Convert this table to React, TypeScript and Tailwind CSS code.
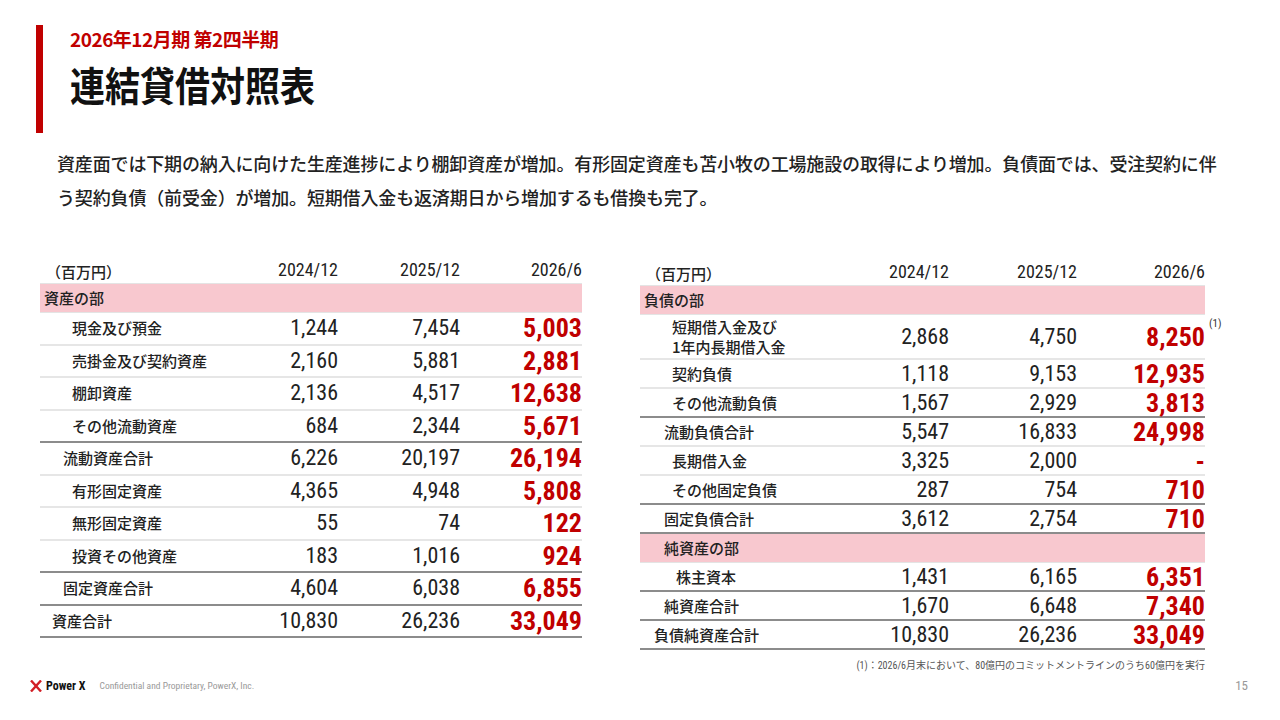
type Row = {
  label: string | string[];
  a?: string;
  b?: string;
  c?: string;
  kind: "section" | "item" | "subtotal" | "total";
  indent: string;
  note?: boolean;
  h?: string;
};

const assets: Row[] = [
  { label: "資産の部", kind: "section", indent: "pl-[4px]" },
  { label: "現金及び預金", a: "1,244", b: "7,454", c: "5,003", kind: "item", indent: "pl-[32px]" },
  { label: "売掛金及び契約資産", a: "2,160", b: "5,881", c: "2,881", kind: "item", indent: "pl-[32px]" },
  { label: "棚卸資産", a: "2,136", b: "4,517", c: "12,638", kind: "item", indent: "pl-[32px]" },
  { label: "その他流動資産", a: "684", b: "2,344", c: "5,671", kind: "item", indent: "pl-[32px]" },
  { label: "流動資産合計", a: "6,226", b: "20,197", c: "26,194", kind: "subtotal", indent: "pl-[23px]" },
  { label: "有形固定資産", a: "4,365", b: "4,948", c: "5,808", kind: "item", indent: "pl-[32px]" },
  { label: "無形固定資産", a: "55", b: "74", c: "122", kind: "item", indent: "pl-[32px]" },
  { label: "投資その他資産", a: "183", b: "1,016", c: "924", kind: "item", indent: "pl-[32px]" },
  { label: "固定資産合計", a: "4,604", b: "6,038", c: "6,855", kind: "subtotal", indent: "pl-[23px]" },
  { label: "資産合計", a: "10,830", b: "26,236", c: "33,049", kind: "total", indent: "pl-[12px]" },
];

const liabilities: Row[] = [
  { label: "負債の部", kind: "section", indent: "pl-[4px]" },
  {
    label: ["短期借入金及び", "1年内長期借入金"],
    a: "2,868",
    b: "4,750",
    c: "8,250",
    kind: "item",
    indent: "pl-[32px]",
    note: true,
    h: "h-[45px]",
  },
  { label: "契約負債", a: "1,118", b: "9,153", c: "12,935", kind: "item", indent: "pl-[32px]" },
  { label: "その他流動負債", a: "1,567", b: "2,929", c: "3,813", kind: "item", indent: "pl-[32px]" },
  { label: "流動負債合計", a: "5,547", b: "16,833", c: "24,998", kind: "subtotal", indent: "pl-[24px]" },
  { label: "長期借入金", a: "3,325", b: "2,000", c: "-", kind: "item", indent: "pl-[32px]" },
  { label: "その他固定負債", a: "287", b: "754", c: "710", kind: "item", indent: "pl-[32px]" },
  { label: "固定負債合計", a: "3,612", b: "2,754", c: "710", kind: "subtotal", indent: "pl-[24px]" },
  { label: "純資産の部", kind: "section", indent: "pl-[24px]" },
  { label: "株主資本", a: "1,431", b: "6,165", c: "6,351", kind: "item", indent: "pl-[36px]" },
  { label: "純資産合計", a: "1,670", b: "6,648", c: "7,340", kind: "subtotal", indent: "pl-[24px]" },
  { label: "負債純資産合計", a: "10,830", b: "26,236", c: "33,049", kind: "total", indent: "pl-[14px]" },
];

function Table({
  rows,
  cols,
  rowH,
}: {
  rows: Row[];
  cols: string;
  rowH: string;
}) {
  return (
    <div className="flex flex-col">
      <div className={`grid ${cols} items-end h-[26px] text-[#222] border-b border-[#e4e4e4] font-['Roboto_Condensed','Liberation_Sans_Narrow','Noto_Sans_CJK_JP',sans-serif]`}>
        <div className="pl-[6px] text-[15px] leading-none pb-[4px] font-medium font-['Noto_Sans_CJK_JP',sans-serif]">
          （百万円）
        </div>
        <div className="text-right text-[18px] leading-none pb-[4px]">2024/12</div>
        <div className="text-right text-[18px] leading-none pb-[4px]">2025/12</div>
        <div className="text-right text-[18px] leading-none pb-[4px]">2026/6</div>
      </div>
      {rows.map((r, i) => {
        const next = rows[i + 1];
        const darkBelow =
          !next ||
          next.kind === "subtotal" ||
          next.kind === "total" ||
          (r.kind === "subtotal" && next.kind === "section");
        if (r.kind === "section") {
          return (
            <div
              key={i}
              className={`h-[29px] bg-[#f8c8cf] flex items-center ${r.indent} text-[15px] font-medium text-[#222] border-b border-[#e4e4e4] font-['Noto_Sans_CJK_JP',sans-serif]`}
            >
              {r.label}
            </div>
          );
        }
        const border = darkBelow
          ? "border-b-2 border-[#8c8c8c]"
          : "border-b-2 border-[#e6e6e6]";
        return (
          <div
            key={i}
            className={`grid ${cols} items-center ${r.h ?? rowH} ${border} font-['Roboto_Condensed','Liberation_Sans_Narrow','Noto_Sans_CJK_JP',sans-serif]`}
          >
            <div className={`${r.indent} text-[15px] leading-[20px] font-medium text-[#222] font-['Noto_Sans_CJK_JP',sans-serif]`}>
              {Array.isArray(r.label)
                ? r.label.map((l) => <div key={l}>{l}</div>)
                : r.label}
            </div>
            <div className="text-right text-[22px] leading-none text-[#222]">{r.a}</div>
            <div className="text-right text-[22px] leading-none text-[#222]">{r.b}</div>
            <div className="relative text-right text-[26px] font-bold leading-none text-[#c00000]">
              {r.c}
              {r.note && (
                <span className="absolute left-full top-[-6px] pl-[4px] text-[11px] font-normal text-[#333]">
                  (1)
                </span>
              )}
            </div>
          </div>
        );
      })}
    </div>
  );
}

function Logo() {
  return (
    <svg width="12" height="12" viewBox="0 0 12 12">
      <path d="M1 0.5 L6 6 L1 11.5" stroke="#d21f26" strokeWidth="2.4" fill="none" />
      <path d="M11 0.5 L6 6 L11 11.5" stroke="#d21f26" strokeWidth="2.4" fill="none" />
    </svg>
  );
}

export default function App() {
  return (
    <div className="w-[1280px] h-[720px] bg-white relative overflow-hidden flex flex-col font-['Noto_Sans_CJK_JP',sans-serif]">
      <div className="flex pt-[25px] pl-[36px]">
        <div className="w-[7px] h-[108px] bg-[#c00000]" />
        <div className="pl-[27px] flex flex-col">
          <div className="text-[19px] font-bold leading-none mt-[4px] text-[#c00000] tracking-[-0.5px]">
            2026年12月期 第2四半期
          </div>
          <div className="text-[35px] font-bold leading-none mt-[15px] text-[#111] scale-y-[1.15] origin-top">
            連結貸借対照表
          </div>
        </div>
      </div>
      <div className="pl-[57px] pr-[40px] mt-[13px] text-[18px] leading-[34px] font-medium text-[#222] tracking-[-0.15px]">
        <div>
          資産面では下期の納入に向けた生産進捗により棚卸資産が増加。有形固定資産も苫小牧の工場施設の取得により増加。負債面では、受注契約に伴
        </div>
        <div>う契約負債（前受金）が増加。短期借入金も返済期日から増加するも借換も完了。</div>
      </div>
      <div className="flex items-start mt-[44px]">
        <div className="ml-[40px] w-[542px]">
          <Table rows={assets} cols="grid-cols-[1fr_122px_122px_122px]" rowH="h-[32.5px]" />
        </div>
        <div className="ml-[58px] w-[565px] mt-[2px] flex flex-col">
          <Table rows={liabilities} cols="grid-cols-[1fr_128px_128px_128px]" rowH="h-[29px]" />
          <div className="text-right text-[10px] text-[#555] mt-[8px] font-['Roboto_Condensed','Liberation_Sans_Narrow','Noto_Sans_CJK_JP',sans-serif]">
            (1)：2026/6月末において、80億円のコミットメントラインのうち60億円を実行
          </div>
        </div>
      </div>
      <div className="absolute left-[30px] bottom-[25px] flex items-center gap-[4px] font-['Roboto_Condensed','Liberation_Sans_Narrow',sans-serif]">
        <Logo />
        <span className="text-[12px] font-bold text-[#111]">Power X</span>
        <span className="ml-[10px] text-[9.5px] text-[#999]">
          Confidential and Proprietary, PowerX, Inc.
        </span>
      </div>
      <div className="absolute right-[32px] bottom-[25px] text-[13px] text-[#999] font-['Roboto_Condensed','Liberation_Sans_Narrow',sans-serif]">
        15
      </div>
    </div>
  );
}
